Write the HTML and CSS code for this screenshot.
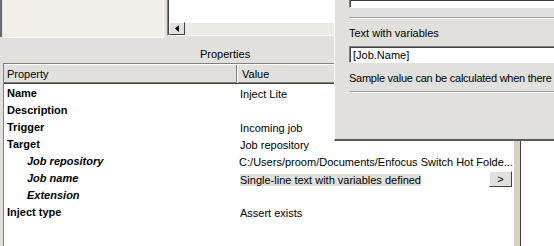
FILE: index.html
```html
<!DOCTYPE html>
<html lang="en">
<head>
  <meta charset="UTF-8">
  <title>Properties</title>
  <link rel="stylesheet" href="styles.css">
</head>
<body>
  <div class="workspace">
    <div class="top">
      <div class="edge"></div>
      <div class="canvas"></div>
      <div class="list">
        <div class="list-body"></div>
        <div class="hscroll">
          <div class="arrow-btn">
            <svg width="4" height="7" viewBox="0 0 4 7"><polygon points="4,0 4,7 0,3.5" fill="#000"/></svg>
          </div>
          <div class="track"></div>
        </div>
      </div>
    </div>

    <div class="main">
      <div class="props-panel">
        <div class="props-title">Properties</div>
        <div class="grid">
          <div class="grid-head">
            <div class="head-prop">Property</div>
            <div class="head-val">Value</div>
          </div>
          <div class="row"><div class="prop">Name</div><div class="val">Inject Lite</div></div>
          <div class="row"><div class="prop">Description</div><div class="val"></div></div>
          <div class="row"><div class="prop">Trigger</div><div class="val">Incoming job</div></div>
          <div class="row"><div class="prop">Target</div><div class="val">Job repository</div></div>
          <div class="row"><div class="prop sub">Job repository</div><div class="val">C:/Users/proom/Documents/Enfocus Switch Hot Folde...</div></div>
          <div class="row">
            <div class="prop sub">Job name</div>
            <div class="val val-edit">
              <span class="selected">Single-line text with variables defined</span>
              <button class="more-btn">&gt;</button>
            </div>
          </div>
          <div class="row"><div class="prop sub">Extension</div><div class="val"></div></div>
          <div class="row"><div class="prop">Inject type</div><div class="val">Assert exists</div></div>
        </div>
      </div>
      <div class="splitter"></div>
      <div class="side"></div>
    </div>
  </div>

  <div class="dialog">
    <div class="field field-top"></div>
    <div class="sep"></div>
    <div class="label">Text with variables</div>
    <div class="field field-input">[Job.Name]</div>
    <div class="label sample">Sample value can be calculated when there</div>
    <div class="sep"></div>
  </div>
</body>
</html>
```

FILE: styles.css
```css
body {
  margin: 0;
  width: 554px;
  height: 246px;
  overflow: hidden;
  position: relative;
  background: #e1e0dc;
  font-family: "Liberation Sans", Arial, sans-serif;
  font-size: 11px;
  color: #000;
}
.workspace {
  display: flex;
  flex-direction: column;
  height: 246px;
}

/* top strip */
.top {
  display: flex;
  height: 39px;
  flex: none;
}
.edge {
  width: 1px;
  height: 37px;
  border-left: 2px solid #6a6a6a;
}
.canvas {
  width: 160px;
  height: 37px;
  background: #f1efe8;
  border-right: 1px solid #fff;
  border-bottom: 1px solid #fff;
}
.list {
  margin-left: 3px;
  flex: 1;
  height: 35px;
  border-left: 1px solid #808080;
  border-bottom: 1px solid #fff;
  box-shadow: inset 1px 0 #404040, inset 0 -1px #d4d0c8;
  display: flex;
  flex-direction: column;
}
.list-body {
  height: 22px;
  margin-left: 1px;
  background: #fff;
}
.hscroll {
  display: flex;
  height: 13px;
  margin-left: 1px;
}
.arrow-btn {
  width: 14px;
  height: 11px;
  background: #e1e0dc;
  border-top: 1px solid #fff;
  border-left: 1px solid #fff;
  border-right: 1px solid #404040;
  border-bottom: 1px solid #404040;
  display: flex;
  align-items: center;
  justify-content: center;
}
.track {
  flex: 1;
  background: #ebeae5;
  border-top: 1px solid #fff;
}

/* properties panel */
.main {
  display: flex;
  flex: 1;
}
.props-panel {
  width: 513px;
  display: flex;
  flex-direction: column;
}
.props-title {
  height: 24px;
  padding-left: 200px;
  padding-top: 8px;
  line-height: 14px;
  box-sizing: border-box;
}
.grid {
  flex: 1;
  margin-left: 3px;
  background: #fff;
  border-top: 1px solid #808080;
  border-left: 1px solid #808080;
}
.grid-head {
  display: flex;
  height: 18px;
  background: #e1e0dc;
  border-top: 1px solid #fff;
  border-bottom: 1px solid #404040;
  box-shadow: inset 0 -1px #808080;
  line-height: 19px;
}
.head-prop {
  width: 229px;
  padding-left: 3px;
  border-right: 1px solid #808080;
}
.head-val {
  flex: 1;
  padding-left: 4px;
  border-left: 1px solid #fff;
}
.row {
  display: flex;
  height: 17px;
  line-height: 17px;
}
.prop {
  width: 230px;
  padding-left: 3px;
  padding-top: 1px;
  font-weight: bold;
}
.prop.sub {
  padding-left: 23px;
  width: 210px;
  font-style: italic;
}
.val {
  flex: 1;
  padding-left: 3px;
  padding-top: 2px;
  line-height: 17px;
  white-space: nowrap;
}
.val-edit {
  display: flex;
  align-items: flex-start;
  justify-content: space-between;
  padding-right: 1px;
}
.selected {
  background: #e1e0dc;
  line-height: 12px;
  margin-top: 3px;
}
.more-btn {
  width: 23px;
  height: 16px;
  padding: 0;
  font-family: "Liberation Sans", Arial, sans-serif;
  font-size: 11px;
  line-height: 12px;
  background: #e1e0dc;
  border-top: 1px solid #fff;
  border-left: 1px solid #fff;
  border-right: 1px solid #404040;
  border-bottom: 1px solid #404040;
}
.splitter {
  width: 6px;
  border-left: 1px solid #fff;
  border-right: 1px solid #404040;
  background: #d4d0c8;
}
.side {
  flex: 1;
  background: #fff;
}

/* overlapping dialog */
.dialog {
  position: absolute;
  left: 334px;
  top: 0;
  width: 220px;
  height: 141px;
  background: #e1e0dc;
  border-left: 1px solid #fff;
  border-bottom: 2px solid #5a5a5a;
  padding-left: 14px;
  box-sizing: border-box;
}
.field {
  background: #fff;
  border-top: 1px solid #808080;
  border-left: 1px solid #808080;
  border-bottom: 1px solid #fff;
  box-shadow: inset 1px 1px #404040;
}
.field-top {
  height: 7px;
  border-top: none;
}
.sep {
  height: 0;
  margin-top: 9px;
  border-top: 1px solid #a0a0a0;
  border-bottom: 1px solid #fff;
}
.label {
  margin-top: 7px;
  line-height: 14px;
  white-space: nowrap;
}
.field-input {
  margin-top: 6px;
  height: 15px;
  line-height: 16px;
  padding-left: 3px;
}
.sample {
  margin-top: 8px;
  letter-spacing: -0.25px;
}
.sample + .sep {
  margin-top: 6px;
}
```
